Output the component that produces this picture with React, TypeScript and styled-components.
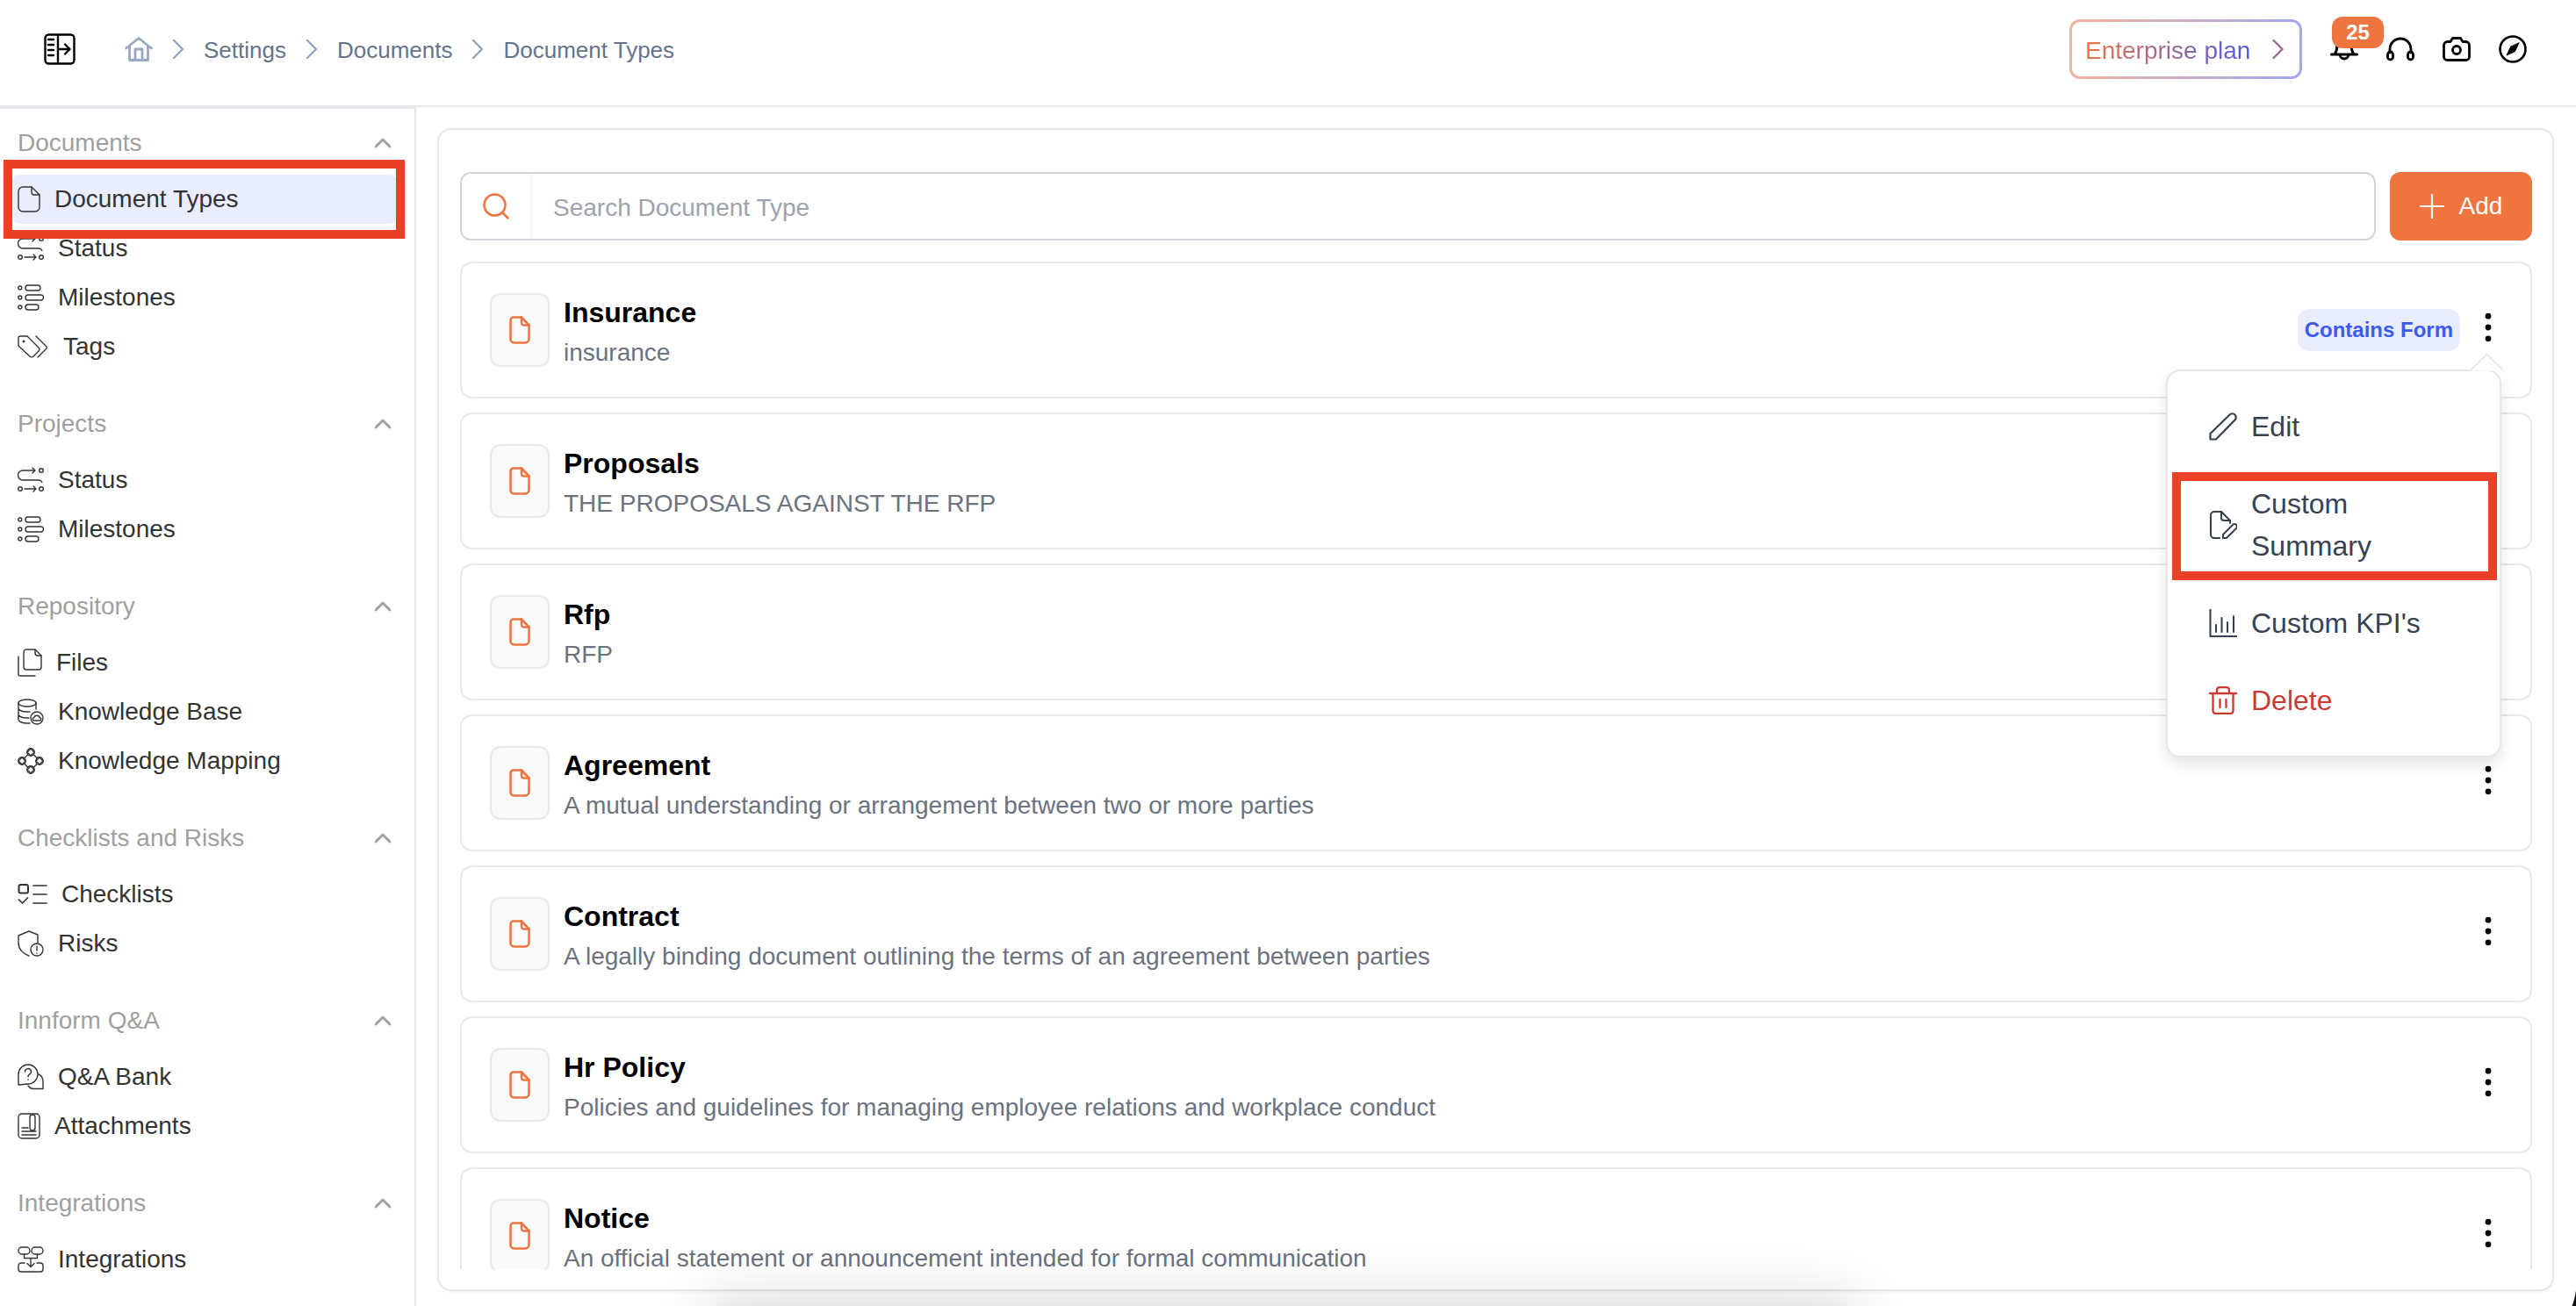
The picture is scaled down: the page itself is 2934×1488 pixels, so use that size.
import React from "react";
import styled, { createGlobalStyle } from "styled-components";
import { ChevronUp, EllipsisVertical, Search } from "lucide-react";

const GlobalStyle = createGlobalStyle`
  html, body {
    margin: 0;
    padding: 0;
    background: #fff;
    overflow: hidden;
    font-family: "Liberation Sans", Arial, sans-serif;
  }
  * {
    box-sizing: border-box;
  }
`;

const Page = styled.div`
  width: 2934px;
  height: 1488px;
  display: flex;
  flex-direction: column;
  overflow: hidden;
  background: #fff;
`;

const Header = styled.header`
  flex: none;
  height: 122px;
  display: flex;
  align-items: center;
  padding: 0 56px 8px 50px;
  border-bottom: 2px solid #e5e7eb;
`;

const Breadcrumb = styled.nav`
  display: flex;
  align-items: center;
  gap: 22px;
  margin-left: 56px;
  flex: 1;
  font-size: 26px;
  color: #64748b;
`;

const Crumb = styled.span`
  padding-top: 3px;
`;

const HeaderActions = styled.div`
  display: flex;
  align-items: center;
  gap: 32px;
  color: #000;
`;

const PlanButton = styled.button`
  width: 265px;
  height: 68px;
  display: flex;
  align-items: center;
  gap: 25px;
  padding: 0 0 0 15px;
  border: 3px solid transparent;
  border-radius: 12px;
  background:
    linear-gradient(#fff, #fff) padding-box,
    linear-gradient(100deg, #f3b49a, #9fa8f2) border-box;
  font-family: inherit;
  font-size: 28px;
`;

const PlanText = styled.span`
  padding-top: 3px;
  background: linear-gradient(90deg, #ee7540, #4f5be6);
  -webkit-background-clip: text;
  background-clip: text;
  color: transparent;
`;

const BellWrap = styled.div`
  position: relative;
  display: flex;
`;

const Badge = styled.span`
  position: absolute;
  top: -21px;
  left: 2px;
  width: 59px;
  height: 36px;
  display: flex;
  align-items: center;
  justify-content: center;
  border-radius: 12px;
  background: #ee7540;
  color: #fff;
  font-size: 24px;
  font-weight: 700;
`;

const Body = styled.div`
  flex: 1;
  min-height: 0;
  display: flex;
`;

const Sidebar = styled.aside`
  flex: none;
  width: 474px;
  padding: 19px 20px 0 14px;
  border-top: 2px solid #e5e7eb;
  border-right: 2px solid #e5e7eb;
  display: flex;
  flex-direction: column;
  gap: 40px;
  overflow: hidden;
`;

const NavGroup = styled.section`
  display: flex;
  flex-direction: column;
`;

const GroupHeader = styled.div`
  height: 40px;
  margin-bottom: 16px;
  padding-left: 6px;
  display: flex;
  align-items: center;
  justify-content: space-between;
  font-size: 28px;
  color: #a0a0a0;
`;

const NavRow = styled.div<{ $active?: boolean }>`
  position: relative;
  height: 56px;
  padding-left: 6px;
  display: flex;
  align-items: center;
  gap: 16px;
  border-radius: 8px;
  font-size: 28px;
  color: #333;
  background: ${(p) => (p.$active ? "#eaedfd" : "transparent")};
`;

const SideMark = styled.span`
  position: absolute;
  top: -17px;
  bottom: -17px;
  left: -10px;
  right: -9px;
  border: 10px solid #ea4025;
  z-index: 2;
`;

const Main = styled.main`
  flex: 1;
  min-width: 0;
  padding: 24px 25px 17px 24px;
  display: flex;
`;

const Panel = styled.div`
  position: relative;
  flex: 1;
  min-width: 0;
  display: flex;
  flex-direction: column;
  gap: 24px;
  padding: 48px 23px 23px 24px;
  border: 2px solid #e5e7eb;
  border-radius: 16px;
  box-shadow: 0 1px 4px rgba(0, 0, 0, 0.05);
`;

const Toolbar = styled.div`
  flex: none;
  display: flex;
  gap: 16px;
`;

const SearchBox = styled.div`
  flex: 1;
  height: 78px;
  display: flex;
  border: 2px solid #d1d5db;
  border-radius: 12px;
`;

const SearchIcon = styled.div`
  width: 80px;
  display: flex;
  align-items: center;
  justify-content: center;
  border-right: 2px solid #f3f4f6;
  color: #ee7540;
`;

const SearchInput = styled.input`
  flex: 1;
  border: 0;
  outline: 0;
  padding: 3px 0 0 24px;
  background: transparent;
  font-family: inherit;
  font-size: 28px;
  &::placeholder {
    color: #9ca3af;
    opacity: 1;
  }
`;

const AddButton = styled.button`
  flex: none;
  width: 162px;
  height: 78px;
  display: flex;
  align-items: center;
  justify-content: center;
  gap: 17px;
  border: 0;
  border-radius: 12px;
  background: #ee7540;
  color: #fff;
  font-family: inherit;
  font-size: 28px;
`;

const List = styled.div`
  flex: 1;
  min-height: 0;
  display: flex;
  flex-direction: column;
  gap: 16px;
  overflow: hidden;
`;

const Card = styled.article`
  flex: none;
  height: 156px;
  display: flex;
  align-items: center;
  gap: 16px;
  padding: 0 26px 0 32px;
  border: 2px solid #e5e7eb;
  border-radius: 14px;
  background: #fff;
`;

const FileTile = styled.div`
  flex: none;
  width: 68px;
  height: 84px;
  display: flex;
  align-items: center;
  justify-content: center;
  border: 2px solid #e5e7eb;
  border-radius: 12px;
  background: #fafafa;
  color: #ee7540;
`;

const CardText = styled.div`
  flex: 1;
  min-width: 0;
`;

const CardTitle = styled.div`
  font-size: 32px;
  line-height: 48px;
  font-weight: 700;
  color: #000;
`;

const CardDescription = styled.div`
  padding-top: 2px;
  margin-bottom: -2px;
  font-size: 28px;
  line-height: 40px;
  color: #6b7280;
`;

const FormTag = styled.span`
  height: 48px;
  padding: 0 8px;
  display: flex;
  align-items: center;
  border-radius: 13px;
  background: #eaedfd;
  color: #3b5bf0;
  font-size: 24px;
  font-weight: 700;
`;

const Kebab = styled.div`
  display: flex;
  margin: 0 0 6px -6px;
  color: #000;
`;

const Menu = styled.div`
  position: absolute;
  top: 273px;
  right: 58px;
  width: 382px;
  padding: 19px 0;
  border: 2px solid #e5e7eb;
  border-radius: 16px;
  background: #fff;
  box-shadow: 0 8px 16px rgba(0, 0, 0, 0.1);
  z-index: 3;
  &::before {
    content: "";
    position: absolute;
    top: -15.5px;
    right: 0;
    width: 27px;
    height: 27px;
    background: #fff;
    border-top: 2px solid #e5e7eb;
    border-left: 2px solid #e5e7eb;
    clip-path: polygon(0 0, 100% 0, 0 100%);
    transform: rotate(45deg);
  }
`;

const MenuItem = styled.div<{ $danger?: boolean }>`
  position: relative;
  display: flex;
  align-items: center;
  gap: 16px;
  padding: 20px 49px 20px 47px;
  font-size: 32px;
  line-height: 48px;
  color: ${(p) => (p.$danger ? "#cb3a32" : "#374151")};
`;

const MenuMark = styled.span`
  position: absolute;
  top: 8px;
  bottom: 5px;
  left: 5px;
  right: 3px;
  border: 10px solid #ea4025;
`;

const BottomGlow = styled.div`
  position: fixed;
  left: 810px;
  top: 1488px;
  width: 1300px;
  height: 80px;
  box-shadow: 0 0 70px rgba(0, 0, 0, 0.2);
  pointer-events: none;
  z-index: 4;
`;

const CornerMark = styled.svg`
  position: fixed;
  right: 0;
  bottom: 0;
  z-index: 5;
`;

const Glyph = styled.svg.attrs({ fill: "none", stroke: "currentColor" })<{
  $weight?: number;
}>`
  flex: none;
  display: block;
  stroke-width: ${(p) => p.$weight ?? 1.4};
  stroke-linecap: round;
  stroke-linejoin: round;
`;

const HomeGlyph = styled(Glyph)`
  color: #9aa9c0;
`;

const CrumbChevron = styled(Glyph)`
  color: #8f9fb8;
`;

const PlanChevron = styled(Glyph)`
  color: #9b6a90;
`;

const Chevron = () => (
  <CrumbChevron width={14} height={24} viewBox="0 0 14 24" $weight={2.2}>
    <path d="M2 2l10 10L2 22" />
  </CrumbChevron>
);

const PanelToggleIcon = () => (
  <Glyph width={36} height={36} viewBox="0 0 36 36" $weight={2.4}>
    <rect x="1.5" y="1.5" width="33" height="33" rx="4" />
    <path d="M16 2v32M5 7h6M5 13h6M5 19h6M5 25h6M17 18h12M24 12.5l5.5 5.5-5.5 5.5" />
  </Glyph>
);

const HomeIcon = () => (
  <HomeGlyph width={32} height={28} viewBox="0 0 32 28" $weight={2.8}>
    <path d="M1.5 13L16 1.5 30.5 13M5.5 10v16.5h21V10M12 26.5V14h8v12.5" />
  </HomeGlyph>
);

const BellIcon = () => (
  <Glyph width={32} height={32} viewBox="0 0 32 32" $weight={3}>
    <path d="M1.5 22h29M5 22c2-3 3-7 3-11a8 8 0 0 1 16 0c0 4 1 8 3 11M11 22a5 5 0 0 0 10 0" />
  </Glyph>
);

const HeadsetIcon = () => (
  <Glyph width={32} height={32} viewBox="0 0 32 32" $weight={2.8}>
    <path d="M4 20v-4a12 12 0 0 1 24 0v4" />
    <rect x="1.5" y="19" width="6" height="9" rx="3" />
    <rect x="24.5" y="19" width="6" height="9" rx="3" />
  </Glyph>
);

const CameraIcon = () => (
  <Glyph width={32} height={32} viewBox="0 0 32 32" $weight={2.8}>
    <path d="M11.5 3.5h9l2.5 4h3.5a4 4 0 0 1 4 4v13a4 4 0 0 1-4 4h-21a4 4 0 0 1-4-4v-13a4 4 0 0 1 4-4H9z" />
    <circle cx="16" cy="17" r="4.5" />
  </Glyph>
);

const CompassIcon = () => (
  <Glyph width={32} height={32} viewBox="0 0 32 32" $weight={2.6}>
    <circle cx="16" cy="16" r="14.5" />
    <path d="M23 9l-4.5 9.5L9 23l4.5-9.5z" fill="currentColor" strokeWidth={1} />
  </Glyph>
);

const PlusIcon = () => (
  <Glyph width={28} height={28} viewBox="0 0 28 28" $weight={2.2}>
    <path d="M14 1v26M1 14h26" />
  </Glyph>
);

const OrangeFileIcon = () => (
  <Glyph width={24} height={32} viewBox="0 0 24 32" $weight={2.6}>
    <path d="M5 1.5h9l8.5 9V26a4.5 4.5 0 0 1-4.5 4.5H5.5A4 4 0 0 1 1.5 26V5a3.5 3.5 0 0 1 3.5-3.5z" />
    <path d="M14 1.5V8a2.5 2.5 0 0 0 2.5 2.5h6" />
  </Glyph>
);

const DocIcon = () => (
  <Glyph width={26} height={30} viewBox="0 0 26 30">
    <path d="M6 1h10l9 9v14a5 5 0 0 1-5 5H6a5 5 0 0 1-5-5V6a5 5 0 0 1 5-5z" />
    <path d="M16 1v6a3 3 0 0 0 3 3h6" />
  </Glyph>
);

const StatusIcon = () => (
  <Glyph width={30} height={30} viewBox="0 0 30 30">
    <path d="M20 4H6a5.5 5.5 0 0 0 0 11h18a5 5 0 0 1 4 2.5M17 1l3 3-3 3" />
    <circle cx="27" cy="4" r="2.3" />
    <circle cx="3" cy="25" r="2.3" />
    <circle cx="27" cy="25" r="2.3" />
    <path d="M8 25h13M18 22l3 3-3 3" />
  </Glyph>
);

const MilestonesIcon = () => (
  <Glyph width={30} height={30} viewBox="0 0 30 30">
    <circle cx="2.8" cy="4" r="2" />
    <circle cx="2.8" cy="15" r="2" />
    <circle cx="2.8" cy="26" r="2" />
    <rect x="9" y="1" width="17" height="6" rx="3" />
    <rect x="9" y="12" width="20.5" height="6" rx="3" />
    <rect x="9" y="23" width="15" height="6" rx="3" />
  </Glyph>
);

const TagsIcon = () => (
  <Glyph width={36} height={26} viewBox="0 0 36 26">
    <path d="M3 1h8l13 13a3 3 0 0 1 0 4l-6 6a3 3 0 0 1-4 0L1 12V3a2 2 0 0 1 2-2z" />
    <path d="M21 1l12 12a2 2 0 0 1 0 2L23 25" />
    <circle cx="7" cy="7" r="0.7" />
  </Glyph>
);

const FilesIcon = () => (
  <Glyph width={28} height={32} viewBox="0 0 28 32">
    <path d="M10 1h10l7 7v13a3 3 0 0 1-3 3H10a3 3 0 0 1-3-3V4a3 3 0 0 1 3-3z" />
    <path d="M20 1v4a3 3 0 0 0 3 3h4M1 9v20a2 2 0 0 0 2 2h17" />
  </Glyph>
);

const KnowledgeBaseIcon = () => (
  <Glyph width={30} height={30} viewBox="0 0 30 30">
    <ellipse cx="11" cy="5" rx="10" ry="4" />
    <path d="M1 5v19c0 2 4 4 10 4h3M21 5v7M1 11c0 2 4 4 10 4h3M1 18c0 2 4 4 10 4h2" />
    <circle cx="22" cy="22" r="7" />
    <path d="M19 25h6a1.6 1.6 0 0 0 .3-3.2 3.4 3.4 0 0 0-6.6 0A1.6 1.6 0 0 0 19 25z" />
  </Glyph>
);

const MappingIcon = () => (
  <Glyph width={30} height={30} viewBox="0 0 30 30">
    <path d="M15 1l4 4-4 4-4-4zM15 21l4 4-4 4-4-4zM5 11l4 4-4 4-4-4zM25 11l4 4-4 4-4-4z" />
    <path d="M11.5 8L8 11.5M18.5 8l3.5 3.5M11.5 22L8 18.5M18.5 22l3.5-3.5" />
    <circle cx="15" cy="5" r="4.2" />
    <circle cx="15" cy="25" r="4.2" />
    <circle cx="5" cy="15" r="4.2" />
    <circle cx="25" cy="15" r="4.2" />
  </Glyph>
);

const ChecklistIcon = () => (
  <Glyph width={34} height={24} viewBox="0 0 34 24" $weight={1.7}>
    <rect x="1.5" y="1" width="10.5" height="9.5" rx="2" strokeWidth={2} />
    <path d="M1.5 18l4 4 6-6M18 2h15M18 12h15M18 22h15" />
  </Glyph>
);

const RiskIcon = () => (
  <Glyph width={30} height={30} viewBox="0 0 30 30">
    <path d="M13 29C6 27 1 21 1 14V6l12-5 10 4v9" />
    <circle cx="22" cy="22" r="7" />
    <path d="M22 18v5M22 26v.2" />
  </Glyph>
);

const QuestionIcon = () => (
  <Glyph width={30} height={30} viewBox="0 0 30 30">
    <path d="M1 24V12A11 11 0 1 1 12 23z" />
    <path d="M12 25a8 8 0 0 0 6 3.5h11V20a9 9 0 0 0-5-8" />
    <path d="M8.5 9a3.5 3.5 0 1 1 5 3.2c-1 .6-1.5 1.2-1.5 2.5M12 18v.2" />
  </Glyph>
);

const AttachmentIcon = () => (
  <Glyph width={26} height={30} viewBox="0 0 26 30">
    <rect x="1" y="1" width="24" height="28" rx="4" />
    <path d="M14 17V5a3 3 0 0 1 6 0v12a3 3 0 0 1-6 0zM5 17h7M5 21h16M5 25h16" />
  </Glyph>
);

const IntegrationIcon = () => (
  <Glyph width={30} height={30} viewBox="0 0 30 30">
    <rect x="1" y="1" width="13" height="8" rx="4" />
    <rect x="16" y="1" width="13" height="8" rx="4" />
    <path d="M7.5 9v4.5h15V9M15 14v9M11 19.5l4 4 4-4" />
    <path d="M8 19H4a3 3 0 0 0-3 3v4a3 3 0 0 0 3 3h22a3 3 0 0 0 3-3v-4a3 3 0 0 0-3-3h-4" />
  </Glyph>
);

const PenIcon = () => (
  <Glyph width={32} height={32} viewBox="0 0 32 32" $weight={2.2}>
    <path d="M1.5 30.5v-6.5L23.5 2.5a4 4 0 0 1 6 6L8 30.5z" />
  </Glyph>
);

const SummaryIcon = () => (
  <Glyph width={32} height={32} viewBox="0 0 32 32" $weight={2.1}>
    <path d="M12 31H6a4 4 0 0 1-4-4V5a4 4 0 0 1 4-4h8l10 10v3" />
    <path d="M14 1v7a3 3 0 0 0 3 3h7" />
    <path d="M16 31v-4l11-11a2.8 2.8 0 0 1 4 4L20 31z" />
  </Glyph>
);

const BarsIcon = () => (
  <Glyph width={32} height={32} viewBox="0 0 32 32" $weight={2.1}>
    <path d="M1.5 0.5V31h30M8 18v8M14.5 10v16M21 15v11M28 8v18" />
  </Glyph>
);

const TrashIcon = () => (
  <Glyph width={32} height={32} viewBox="0 0 32 32" $weight={2.3}>
    <path d="M1 8h30M4.5 8v20a3 3 0 0 0 3 3h17a3 3 0 0 0 3-3V8M9 8V4a3 3 0 0 1 3-3h8a3 3 0 0 1 3 3v4M12.5 15v9M19.5 15v9" />
  </Glyph>
);

type NavItem = { label: string; icon: React.ReactNode; marked?: boolean };

const navGroups: { title: string; items: NavItem[] }[] = [
  {
    title: "Documents",
    items: [
      { label: "Document Types", icon: <DocIcon />, marked: true },
      { label: "Status", icon: <StatusIcon /> },
      { label: "Milestones", icon: <MilestonesIcon /> },
      { label: "Tags", icon: <TagsIcon /> },
    ],
  },
  {
    title: "Projects",
    items: [
      { label: "Status", icon: <StatusIcon /> },
      { label: "Milestones", icon: <MilestonesIcon /> },
    ],
  },
  {
    title: "Repository",
    items: [
      { label: "Files", icon: <FilesIcon /> },
      { label: "Knowledge Base", icon: <KnowledgeBaseIcon /> },
      { label: "Knowledge Mapping", icon: <MappingIcon /> },
    ],
  },
  {
    title: "Checklists and Risks",
    items: [
      { label: "Checklists", icon: <ChecklistIcon /> },
      { label: "Risks", icon: <RiskIcon /> },
    ],
  },
  {
    title: "Innform Q&A",
    items: [
      { label: "Q&A Bank", icon: <QuestionIcon /> },
      { label: "Attachments", icon: <AttachmentIcon /> },
    ],
  },
  {
    title: "Integrations",
    items: [{ label: "Integrations", icon: <IntegrationIcon /> }],
  },
];

const documentTypes = [
  { title: "Insurance", text: "insurance", hasForm: true },
  { title: "Proposals", text: "THE PROPOSALS AGAINST THE RFP" },
  { title: "Rfp", text: "RFP" },
  {
    title: "Agreement",
    text: "A mutual understanding or arrangement between two or more parties",
  },
  {
    title: "Contract",
    text: "A legally binding document outlining the terms of an agreement between parties",
  },
  {
    title: "Hr Policy",
    text: "Policies and guidelines for managing employee relations and workplace conduct",
  },
  {
    title: "Notice",
    text: "An official statement or announcement intended for formal communication",
  },
];

export default function App() {
  return (
    <Page>
      <GlobalStyle />
      <Header>
        <PanelToggleIcon />
        <Breadcrumb>
          <HomeIcon />
          <Chevron />
          <Crumb>Settings</Crumb>
          <Chevron />
          <Crumb>Documents</Crumb>
          <Chevron />
          <Crumb>Document Types</Crumb>
        </Breadcrumb>
        <HeaderActions>
          <PlanButton>
            <PlanText>Enterprise plan</PlanText>
            <PlanChevron width={13} height={24} viewBox="0 0 13 24" $weight={2.4}>
              <path d="M1.5 2l10 10-10 10" />
            </PlanChevron>
          </PlanButton>
          <BellWrap>
            <BellIcon />
            <Badge>25</Badge>
          </BellWrap>
          <HeadsetIcon />
          <CameraIcon />
          <CompassIcon />
        </HeaderActions>
      </Header>
      <Body>
        <Sidebar>
          {navGroups.map((group) => (
            <NavGroup key={group.title}>
              <GroupHeader>
                {group.title}
                <ChevronUp size={32} strokeWidth={2.2} />
              </GroupHeader>
              {group.items.map((item) => (
                <NavRow key={item.label} $active={item.marked}>
                  {item.icon}
                  {item.label}
                  {item.marked && <SideMark />}
                </NavRow>
              ))}
            </NavGroup>
          ))}
        </Sidebar>
        <Main>
          <Panel>
            <Toolbar>
              <SearchBox>
                <SearchIcon>
                  <Search size={36} strokeWidth={1.7} />
                </SearchIcon>
                <SearchInput placeholder="Search Document Type" />
              </SearchBox>
              <AddButton>
                <PlusIcon />
                Add
              </AddButton>
            </Toolbar>
            <List>
              {documentTypes.map((doc) => (
                <Card key={doc.title}>
                  <FileTile>
                    <OrangeFileIcon />
                  </FileTile>
                  <CardText>
                    <CardTitle>{doc.title}</CardTitle>
                    <CardDescription>{doc.text}</CardDescription>
                  </CardText>
                  {doc.hasForm && <FormTag>Contains Form</FormTag>}
                  <Kebab>
                    <EllipsisVertical size={44} strokeWidth={1.7} />
                  </Kebab>
                </Card>
              ))}
            </List>
            <Menu>
              <MenuItem>
                <PenIcon />
                Edit
              </MenuItem>
              <MenuItem>
                <SummaryIcon />
                Custom Summary
                <MenuMark />
              </MenuItem>
              <MenuItem>
                <BarsIcon />
                Custom KPI's
              </MenuItem>
              <MenuItem $danger>
                <TrashIcon />
                Delete
              </MenuItem>
            </Menu>
          </Panel>
        </Main>
      </Body>
      <BottomGlow />
      <CornerMark width={6} height={18} viewBox="0 0 6 18">
        <path d="M6 0v18H1.5C3.5 13 5 7 6 0z" fill="#111" />
      </CornerMark>
    </Page>
  );
}
